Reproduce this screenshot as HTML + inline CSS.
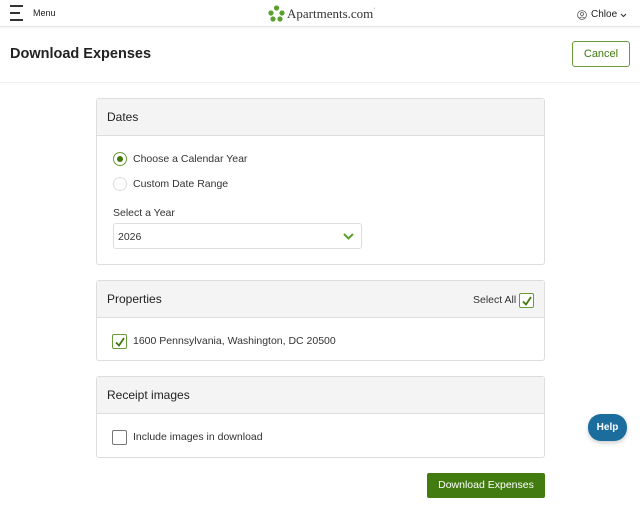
<!DOCTYPE html>
<html><head><style>
*{box-sizing:border-box;margin:0;padding:0}
body{width:640px;height:513px;background:#fff;font-family:"Liberation Sans",sans-serif;color:#222;position:relative;overflow:hidden}
.a{position:absolute}
.card{position:absolute;left:96px;width:449px;border:1px solid #ddd;border-radius:3px;background:#fff}
.hd{height:37px;background:#f4f4f4;border-bottom:1px solid #ddd;padding:0 10px;font-size:12px;line-height:36px;color:#222}
.t{font-size:10.5px;color:#333}
.cb{position:absolute;width:15px;height:15px;border:1px solid #777;border-radius:2px;background:#fff}
.cb.on{border-color:#6a9a3a}
.cb svg{position:absolute;left:1px;top:1px}
</style></head><body>
<div class="a" style="left:0;top:0;width:640px;height:27px;border-bottom:1px solid #e6e6e6;box-shadow:0 1px 2px rgba(0,0,0,.05)"></div>
<div class="a" style="left:10px;top:5px;width:13px;height:2px;background:#333"></div>
<div class="a" style="left:10px;top:12px;width:10px;height:2px;background:#333"></div>
<div class="a" style="left:10px;top:19px;width:13px;height:2px;background:#333"></div>
<div class="a" style="left:33px;top:8px;font-size:9px">Menu</div>
<svg class="a" style="left:268px;top:5px" width="17" height="17" viewBox="0 0 17 17"><g fill="#5aa02c"><circle cx="8.5" cy="3" r="2.6"/><circle cx="3" cy="8" r="2.6"/><circle cx="14" cy="8" r="2.6"/><circle cx="5" cy="14" r="2.6"/><circle cx="12" cy="14" r="2.6"/></g></svg>
<div class="a" style="left:287px;top:6px;font-family:'Liberation Serif',serif;font-size:13px;color:#333">Apartments.com<span style="font-size:6px;vertical-align:top">·</span></div>
<svg class="a" style="left:577px;top:10px" width="10" height="10" viewBox="0 0 10 10"><circle cx="5" cy="5" r="4.4" fill="none" stroke="#555" stroke-width=".8"/><circle cx="5" cy="4" r="1.5" fill="none" stroke="#555" stroke-width=".8"/><path d="M2.3 8.2Q5 5.8 7.7 8.2" fill="none" stroke="#555" stroke-width=".8"/></svg>
<div class="a" style="left:591px;top:9px;font-size:10px">Chloe</div>
<svg class="a" style="left:620px;top:13px" width="7" height="5" viewBox="0 0 7 5"><path d="M1 1l2.5 2.5L6 1" fill="none" stroke="#333" stroke-width="1.1"/></svg>
<div class="a" style="left:10px;top:46px;font-size:14.5px;font-weight:bold;color:#222">Download Expenses</div>
<div class="a" style="left:572px;top:41px;width:58px;height:26px;border:1px solid #6a9a3a;border-radius:3px;font-size:11px;color:#3f7a0c;text-align:center;line-height:24px">Cancel</div>
<div class="a" style="left:0;top:82px;width:640px;height:1px;background:#eee"></div>

<div class="card" style="top:98px;height:167px">
<div class="hd">Dates</div>
<div class="a" style="left:16px;top:53px;width:14px;height:14px;border-radius:50%;border:1px solid #6a9a3a"><div style="position:absolute;left:3px;top:3px;width:6px;height:6px;border-radius:50%;background:#3f7a0c"></div></div>
<div class="a t" style="left:36px;top:54px">Choose a Calendar Year</div>
<div class="a" style="left:16px;top:78px;width:14px;height:14px;border-radius:50%;border:1px solid #ddd"></div>
<div class="a t" style="left:36px;top:79px">Custom Date Range</div>
<div class="a t" style="left:16px;top:108px">Select a Year</div>
<div class="a" style="left:16px;top:124px;width:249px;height:26px;border:1px solid #ddd;border-radius:3px"></div>
<div class="a t" style="left:21px;top:132px">2026</div>
<svg class="a" style="left:246px;top:134px" width="11" height="7" viewBox="0 0 11 7"><path d="M1 1l4.5 4.5L10 1" fill="none" stroke="#5aa02c" stroke-width="2"/></svg>
</div>

<div class="card" style="top:280px;height:81px">
<div class="hd">Properties</div>
<div class="a t" style="left:376px;top:13px">Select All</div>
<div class="cb on" style="left:422px;top:12px"><svg width="12" height="12" viewBox="0 0 12 12"><path d="M2 6.5l3 3L10 2" fill="none" stroke="#3f7a0c" stroke-width="1.8"/></svg></div>
<div class="cb on" style="left:15px;top:53px"><svg width="12" height="12" viewBox="0 0 12 12"><path d="M2 6.5l3 3L10 2" fill="none" stroke="#3f7a0c" stroke-width="1.8"/></svg></div>
<div class="a t" style="left:36px;top:54px">1600 Pennsylvania, Washington, DC 20500</div>
</div>

<div class="card" style="top:376px;height:82px">
<div class="hd">Receipt images</div>
<div class="cb" style="left:15px;top:53px"></div>
<div class="a t" style="left:36px;top:54px">Include images in download</div>
</div>

<div class="a" style="left:427px;top:473px;width:118px;height:25px;background:#427c10;border-radius:2px;color:#fff;font-size:10.5px;text-align:center;line-height:25px">Download Expenses</div>
<div class="a" style="left:588px;top:414px;width:39px;height:27px;background:#1b6d9e;border-radius:13px;color:#fff;font-size:10px;font-weight:bold;text-align:center;line-height:27px;box-shadow:0 2px 4px rgba(0,0,0,.2)">Help</div>
</body></html>
